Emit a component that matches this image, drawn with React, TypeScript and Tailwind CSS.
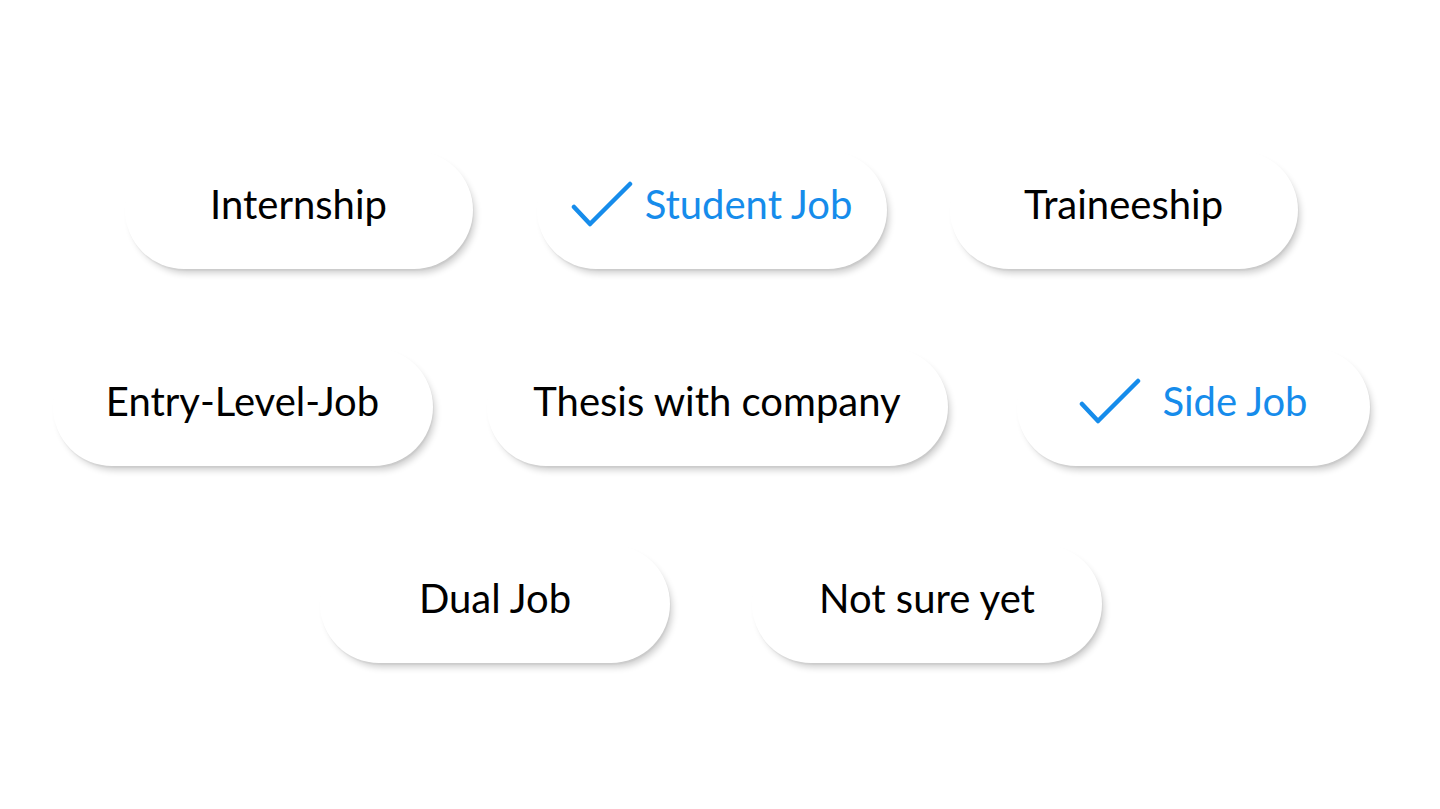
import React from "react";

type Pill = { label: string; width: string; selected?: boolean; gapClass?: string; ml?: string };

const ROWS: { pills: Pill[] }[] = [
  {
    pills: [
      { label: "Internship", width: "w-[348px]" },
      { label: "Student Job", width: "w-[350px]", selected: true, gapClass: "gap-[12px]", ml: "ml-[64px]" },
      { label: "Traineeship", width: "w-[348px]", ml: "ml-[63px]" },
    ],
  },
  {
    pills: [
      { label: "Entry-Level-Job", width: "w-[380px]" },
      { label: "Thesis with company", width: "w-[461px]", ml: "ml-[54px]" },
      { label: "Side Job", width: "w-[353px]", selected: true, gapClass: "gap-[22px]", ml: "ml-[69px]" },
    ],
  },
  {
    pills: [
      { label: "Dual Job", width: "w-[350px]" },
      { label: "Not sure yet", width: "w-[350px]", ml: "ml-[82px]" },
    ],
  },
];

function Check() {
  return (
    <svg width="62" height="47" viewBox="0 0 62 47" fill="none" className="shrink-0">
      <path
        d="M3 26 L19 43 L59 3"
        stroke="#168CEB"
        strokeWidth="4.5"
        strokeLinecap="round"
        strokeLinejoin="round"
      />
    </svg>
  );
}

export default function App() {
  return (
    <div
      className="w-full h-[809px] bg-white flex flex-col items-center pt-[151px] gap-[79px] pr-[18px]"
      style={{ fontFamily: "Lato, 'Noto Sans', sans-serif" }}
    >
      {ROWS.map((row, i) => (
        <div key={i} className="flex justify-center">
          {row.pills.map((p) => (
            <div
              key={p.label}
              className={`${p.width} ${p.ml ?? ""} h-[118px] rounded-full bg-white flex items-center justify-center pb-[12px] shadow-[4px_6px_7px_-2px_rgba(0,0,0,0.2),1px_2px_1px_rgba(0,0,0,0.04)]`}
            >
              {p.selected ? (
                <div className={`flex items-center ${p.gapClass}`}>
                  <Check />
                  <span className="text-[40px] text-[#168CEB] leading-none">{p.label}</span>
                </div>
              ) : (
                <span className="text-[40px] text-black leading-none">{p.label}</span>
              )}
            </div>
          ))}
        </div>
      ))}
    </div>
  );
}
